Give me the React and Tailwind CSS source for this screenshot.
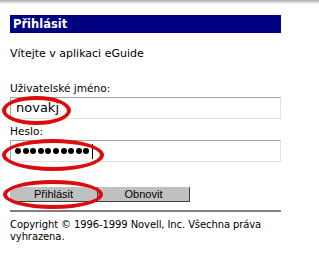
import React from "react";

const Ring = ({ className }) => (
    <div className={`absolute rounded-[50%] border-[4px] border-[#dc0c0c] pointer-events-none ${className}`} />
);

export default function App() {
    return (
        <div className="relative w-[319px] h-[267px] bg-white overflow-hidden" style={{ fontFamily: '"DejaVu Sans", Verdana, sans-serif' }}>
            <div className="h-[4px] bg-gradient-to-b from-[#a8a8a8] to-white" />

            <div className="w-[271px] ml-[10px] mt-[11px]">
                <div className="h-[18px] bg-[#000080] text-white font-bold text-[11.5px] leading-[18px] pl-[3px]">Přihlásit</div>

                <div className="mt-[14px] text-[11px] leading-[13px] text-black">Vítejte v aplikaci eGuide</div>

                <div className="mt-[22px] text-[10.6px] leading-[13px] text-black">Uživatelské jméno:</div>
                <div className="mt-[2px] h-[22px] border border-[#a5a5a5] border-b-[#e2e2e2] border-r-[#e2e2e2] text-[13px] leading-[20px] pl-[5px] text-black">
                    novakj
                </div>

                <div className="mt-[6px] text-[10.6px] leading-[13px] text-black">Heslo:</div>
                <div className="mt-[2px] h-[22px] border border-[#a5a5a5] border-b-[#e2e2e2] border-r-[#e2e2e2] flex items-center pl-[4px]">
                    <div className="flex gap-[1.6px]">
                        {Array.from({ length: 10 }).map((_, i) => (
                            <span key={i} className="w-[6px] h-[6px] rounded-full bg-black" />
                        ))}
                    </div>
                    <span className="ml-[3px] w-[1px] h-[15px] bg-black" />
                </div>

                <div className="mt-[25px] flex">
                    <div className="w-[88px] h-[15px] bg-[#c0c0c0] border-r border-b border-[#404040] text-[11px] leading-[14px] text-center text-black" style={{ fontFamily: '"Liberation Sans", Arial, sans-serif' }}>Přihlásit</div>
                    <div className="w-[92px] h-[15px] bg-[#c0c0c0] border-r border-b border-[#404040] text-[11px] leading-[14px] text-center text-black" style={{ fontFamily: '"Liberation Sans", Arial, sans-serif' }}>Obnovit</div>
                </div>

                <div className="mt-[8px] h-[2px] bg-[#808080]" />

                <div className="mt-[7px] text-[10px] leading-[12px] tracking-[-0.1px] text-black">
                    Copyright © 1996-1999 Novell, Inc. Všechna práva vyhrazena.
                </div>
            </div>

            <Ring className="left-[2px] top-[96px] w-[69px] h-[29px]" />
            <Ring className="left-[2px] top-[139px] w-[102px] h-[32px]" />
            <Ring className="left-[3px] top-[180px] w-[100px] h-[29px]" />
        </div>
    );
}
